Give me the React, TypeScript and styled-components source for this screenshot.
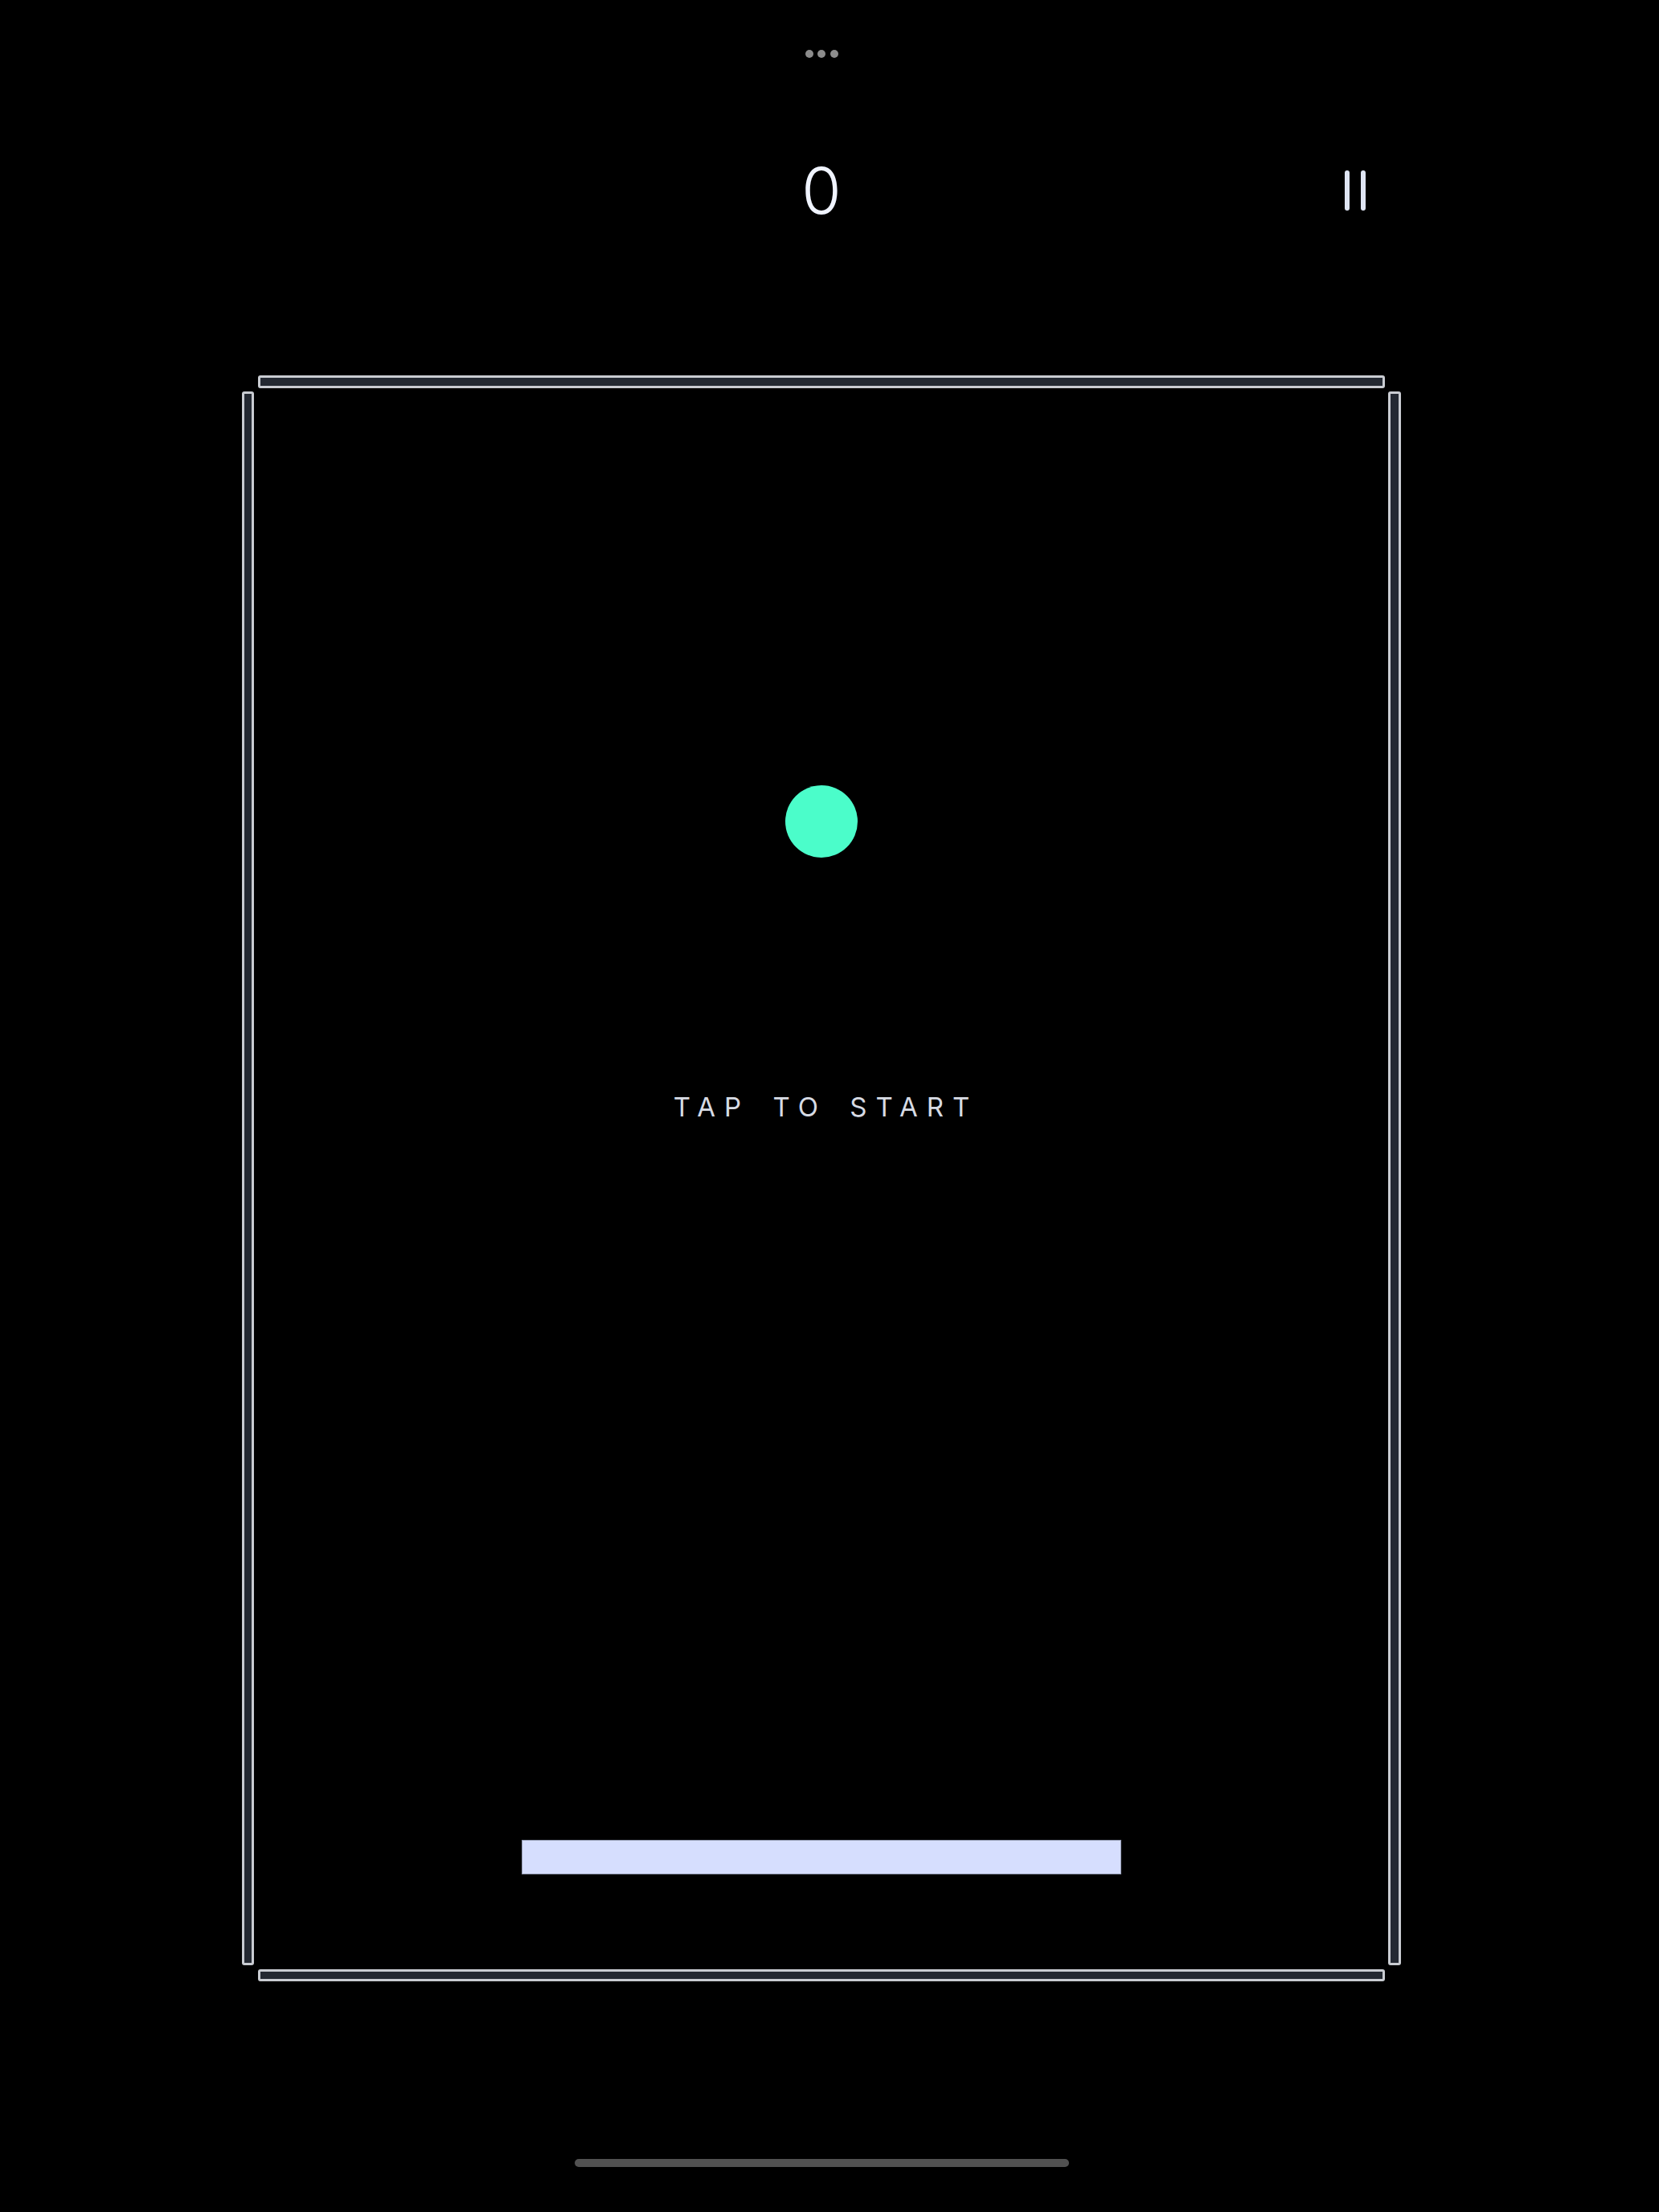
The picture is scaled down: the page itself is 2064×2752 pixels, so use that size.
import styled, { createGlobalStyle } from 'styled-components'

const GlobalStyle = createGlobalStyle`
  html,
  body {
    margin: 0;
    padding: 0;
    background: #000;
  }

  body {
    font-family: Inter, 'Noto Sans', 'Liberation Sans', sans-serif;
  }
`

const Screen = styled.div`
  box-sizing: border-box;
  width: 2064px;
  height: 2752px;
  padding-right: 20px;
  display: flex;
  flex-direction: column;
  align-items: center;
  background: #000;
  overflow: hidden;
`

const StatusDots = styled.div`
  display: flex;
  gap: 5.5px;
  margin-top: 62px;
  height: 10px;
`

const Dot = styled.span`
  width: 10px;
  height: 10px;
  border-radius: 50%;
  background: #8c8c8c;
`

const Header = styled.div`
  display: grid;
  grid-template-columns: 1fr auto 1fr;
  align-items: center;
  width: 1442px;
  height: 80px;
  margin-top: 125px;
`

const Score = styled.div`
  grid-column: 2;
  font-size: 80px;
  line-height: 80px;
  font-weight: 350;
  color: #f0f4ff;
`

const PauseButton = styled.button`
  grid-column: 3;
  justify-self: end;
  display: flex;
  align-items: center;
  margin-right: 44px;
  padding: 0;
  border: none;
  background: none;
  cursor: pointer;
`

const Arena = styled.div`
  display: grid;
  grid-template-columns: 20px 1402px 20px;
  grid-template-rows: 20px 1958px 20px;
  margin-top: 190px;
`

const Wall = styled.div<{ $side: 'top' | 'bottom' | 'left' | 'right' }>`
  box-sizing: border-box;
  background: #242932;
  border: 3px solid #c9ccd2;
  border-radius: 3px;

  ${({ $side }) => {
    switch ($side) {
      case 'top':
        return 'grid-column: 2; grid-row: 1; height: 16px; align-self: start;'
      case 'bottom':
        return 'grid-column: 2; grid-row: 3; height: 15px; align-self: end;'
      case 'left':
        return 'grid-column: 1; grid-row: 2; width: 15px; justify-self: start;'
      case 'right':
        return 'grid-column: 3; grid-row: 2; width: 16px; justify-self: end;'
    }
  }}
`

const Field = styled.div`
  grid-column: 2;
  grid-row: 2;
  display: flex;
  flex-direction: column;
  align-items: center;
  padding-top: 490px;
`

const Ball = styled.div`
  width: 90px;
  height: 90px;
  border-radius: 50%;
  background: #4bfdca;
`

const Prompt = styled.div`
  margin-top: 290px;
  padding-left: 11px;
  font-size: 33px;
  line-height: 40px;
  font-weight: 400;
  letter-spacing: 11px;
  word-spacing: 8px;
  color: #d7dbe4;
`

const Paddle = styled.div`
  box-sizing: border-box;
  width: 746px;
  height: 43px;
  margin-top: 892px;
  background: #d6defe;
  border: 1.5px solid #8e95ac;
`

const HomeIndicator = styled.div`
  width: 615px;
  height: 10px;
  margin-top: 221px;
  border-radius: 5px;
  background: #515151;
`

function PauseIcon() {
  return (
    <svg width="26" height="50" viewBox="0 0 26 50" aria-label="Pause">
      <rect x="0" y="0" width="6" height="50" rx="3" fill="#dfe5f3" />
      <rect x="20" y="0" width="6" height="50" rx="3" fill="#dfe5f3" />
    </svg>
  )
}

export default function App() {
  return (
    <>
      <GlobalStyle />
      <Screen>
        <StatusDots>
          <Dot />
          <Dot />
          <Dot />
        </StatusDots>

        <Header>
          <Score>0</Score>
          <PauseButton aria-label="Pause">
            <PauseIcon />
          </PauseButton>
        </Header>

        <Arena>
          <Wall $side="top" />
          <Wall $side="left" />
          <Field>
            <Ball />
            <Prompt>TAP TO START</Prompt>
            <Paddle />
          </Field>
          <Wall $side="right" />
          <Wall $side="bottom" />
        </Arena>

        <HomeIndicator />
      </Screen>
    </>
  )
}
